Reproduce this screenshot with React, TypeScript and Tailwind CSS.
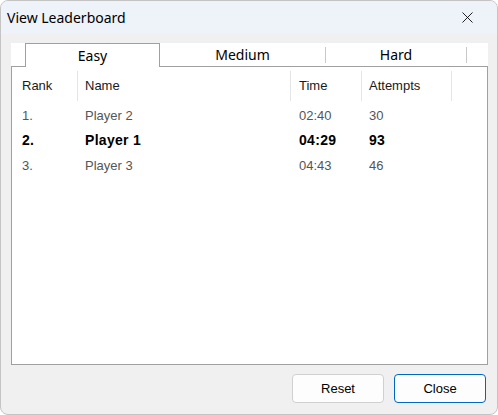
import { X } from 'lucide-react';

const rows = [
  { rank: '1.', name: 'Player 2', time: '02:40', attempts: '30', me: false },
  { rank: '2.', name: 'Player 1', time: '04:29', attempts: '93', me: true },
  { rank: '3.', name: 'Player 3', time: '04:43', attempts: '46', me: false },
];

const sans = { fontFamily: '"Liberation Sans", Arial, sans-serif' };
const ui = { fontFamily: '"Noto Sans", "Open Sans", sans-serif' };

export default function App() {
  return (
    <div className="h-[415px] w-[498px] overflow-hidden bg-white">
      <div className="flex h-[415px] w-[498px] flex-col overflow-hidden rounded-lg border border-[#c4c4c4] bg-[#f0f0f0]">
        {/* title bar */}
        <div className="flex h-[33px] shrink-0 items-center justify-between bg-[#eef2f9] pl-[6px] pr-[20px]" style={ui}>
          <span className="text-[14px] text-black">View Leaderboard</span>
          <X size={19} strokeWidth={1.1} className="text-black" />
        </div>

        <div className="flex flex-1 flex-col pl-[10px] pr-[9px] pt-[9px]">
          {/* tabs */}
          <div className="flex h-[24px] bg-white text-[14px] text-black" style={ui}>
            <div className="w-[14px] border-b border-[#a0a0a0]" />
            <div className="flex w-[135px] items-center justify-center border-x border-t border-[#a0a0a0]">Easy</div>
            <div className="flex w-[165px] items-center justify-center border-b border-[#a0a0a0]">Medium</div>
            <div className="flex w-[141px] items-center border-b border-[#a0a0a0]">
              <div className="h-[16px] w-px bg-[#c8c8c8]" />
              <div className="flex-1 text-center">Hard</div>
            </div>
            <div className="flex flex-1 items-center border-b border-[#a0a0a0]">
              <div className="h-[16px] w-px bg-[#c8c8c8]" />
            </div>
          </div>

          {/* list */}
          <div className="h-[298px] border-x border-b border-[#a0a0a0] bg-white pt-px text-[13px]" style={sans}>
            <div className="flex h-[35px] items-center text-[#1a1a1a]">
              <div className="w-[65px] pl-[10px]">Rank</div>
              <div className="h-[30px] w-[213px] border-l border-[#e5e5e5] pl-[7px] leading-[30px]">Name</div>
              <div className="h-[30px] w-[71px] border-l border-[#e5e5e5] pl-[8px] leading-[30px]">Time</div>
              <div className="h-[30px] w-[90px] border-l border-[#e5e5e5] pl-[7px] leading-[30px]">Attempts</div>
              <div className="h-[30px] border-l border-[#e5e5e5]" />
            </div>
            {rows.map((r) => (
              <div
                key={r.rank}
                className={
                  r.me
                    ? 'flex h-[25px] items-center text-[14px] font-bold tracking-[0.3px] text-black'
                    : 'flex h-[25px] items-center text-[#555555]'
                }
              >
                <div className="w-[65px] pl-[10px]">{r.rank}</div>
                <div className="w-[213px] pl-[8px]">{r.name}</div>
                <div className="w-[71px] pl-[9px]">{r.time}</div>
                <div className="w-[90px] pl-[8px]">{r.attempts}</div>
              </div>
            ))}
          </div>

          {/* buttons */}
          <div className="flex justify-end gap-[10px] pr-[2px] pt-[9px] text-[13px] text-black" style={sans}>
            <button className="h-[29px] w-[92px] rounded-[4px] border border-[#d0d0d0] bg-[#fdfdfd]">Reset</button>
            <button className="h-[29px] w-[92px] rounded-[4px] border border-[#0067c0] bg-[#fdfdfd]">Close</button>
          </div>
        </div>
      </div>
    </div>
  );
}
